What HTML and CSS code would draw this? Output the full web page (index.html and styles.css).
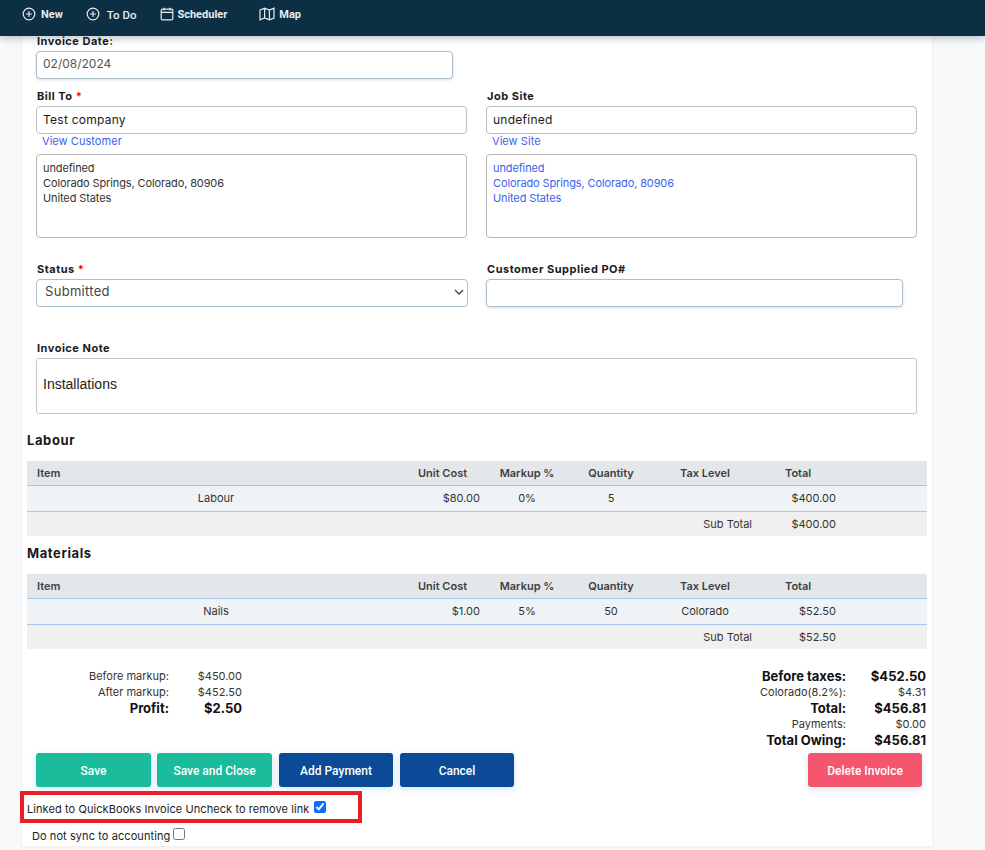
FILE: index.html
```html
<!DOCTYPE html>
<html lang="en">
<head>
<meta charset="utf-8">
<title>Invoice</title>
<link rel="stylesheet" href="styles.css">
</head>
<body>
<nav class="topbar">
  <a class="nav-item nav-new"><svg class="nav-icon" viewBox="0 0 14 14"><circle cx="7" cy="7" r="5.8"/><path d="M7 4v6M4 7h6"/></svg><span>New</span></a>
  <a class="nav-item nav-todo"><svg class="nav-icon" viewBox="0 0 14 14"><circle cx="7" cy="7" r="5.8"/><path d="M7 4v6M4 7h6"/></svg><span class="big">To Do</span></a>
  <a class="nav-item nav-sched"><svg class="nav-icon" viewBox="0 0 14 14"><rect x="1.2" y="2.2" width="11.6" height="10.6" rx="1.4"/><path d="M1.2 5.4h11.6M4 .8v2.6M10 .8v2.6"/></svg><span>Scheduler</span></a>
  <a class="nav-item nav-map"><svg class="nav-icon map-icon" viewBox="0 0 16 14"><path d="M1 3l4.6-1.8L10.4 3 15 1.2v9.8l-4.6 1.8L5.6 11 1 12.8zM5.6 1.2V11M10.4 3v9.8"/></svg><span>Map</span></a>
</nav>

<main class="card">
  <div class="field date-field">
    <label class="label">Invoice Date:</label>
    <input class="input soft date" value="02/08/2024">
  </div>

  <div class="two-col address-row">
    <div class="field">
      <label class="label">Bill To <span class="req">*</span></label>
      <input class="input dark" value="Test company">
      <a class="view-link">View Customer</a>
      <textarea class="address">undefined
Colorado Springs, Colorado, 80906
United States</textarea>
    </div>
    <div class="field">
      <label class="label">Job Site</label>
      <input class="input dark" value="undefined">
      <a class="view-link">View Site</a>
      <textarea class="address blue">undefined
Colorado Springs, Colorado, 80906
United States</textarea>
    </div>
  </div>

  <div class="two-col status-row">
    <div class="field">
      <label class="label">Status <span class="req">*</span></label>
      <select class="select"><option>Submitted</option></select>
    </div>
    <div class="field">
      <label class="label">Customer Supplied PO#</label>
      <input class="input soft po">
    </div>
  </div>

  <div class="field note-field">
    <label class="label">Invoice Note</label>
    <div class="note"><span>Installations</span></div>
  </div>

  <h2 class="section-title first">Labour</h2>
  <table class="items">
    <colgroup><col class="c1"><col class="c2"><col class="c3"><col class="c4"><col class="c5"><col class="c6"><col></colgroup>
    <thead><tr><th class="left">Item</th><th class="unit-h">Unit Cost</th><th>Markup %</th><th>Quantity</th><th>Tax Level</th><th class="total-h">Total</th><th></th></tr></thead>
    <tbody>
      <tr class="row"><td class="center">Labour</td><td class="right">$80.00</td><td class="center">0%</td><td class="center">5</td><td class="center"></td><td class="right">$400.00</td><td></td></tr>
      <tr class="sub"><td></td><td></td><td></td><td></td><td class="sub-label">Sub Total</td><td class="right">$400.00</td><td></td></tr>
    </tbody>
  </table>

  <h2 class="section-title">Materials</h2>
  <table class="items">
    <colgroup><col class="c1"><col class="c2"><col class="c3"><col class="c4"><col class="c5"><col class="c6"><col></colgroup>
    <thead><tr><th class="left">Item</th><th class="unit-h">Unit Cost</th><th>Markup %</th><th>Quantity</th><th>Tax Level</th><th class="total-h">Total</th><th></th></tr></thead>
    <tbody>
      <tr class="row"><td class="center">Nails</td><td class="right">$1.00</td><td class="center">5%</td><td class="center">50</td><td class="center">Colorado</td><td class="right">$52.50</td><td></td></tr>
      <tr class="sub"><td></td><td></td><td></td><td></td><td class="sub-label">Sub Total</td><td class="right">$52.50</td><td></td></tr>
    </tbody>
  </table>

  <div class="summary">
    <dl class="sum sum-left">
      <dt>Before markup:</dt><dd>$450.00</dd>
      <dt>After markup:</dt><dd>$452.50</dd>
      <dt class="strong">Profit:</dt><dd class="strong">$2.50</dd>
    </dl>
    <dl class="sum sum-right">
      <dt class="strong">Before taxes:</dt><dd class="strong">$452.50</dd>
      <dt>Colorado(8.2%):</dt><dd>$4.31</dd>
      <dt class="strong">Total:</dt><dd class="strong">$456.81</dd>
      <dt>Payments:</dt><dd>$0.00</dd>
      <dt class="strong">Total Owing:</dt><dd class="strong">$456.81</dd>
    </dl>
  </div>

  <div class="actions">
    <button class="btn green">Save</button>
    <button class="btn green">Save and Close</button>
    <button class="btn navy">Add Payment</button>
    <button class="btn navy">Cancel</button>
    <button class="btn red">Delete Invoice</button>
  </div>

  <div class="qb-box"><label class="check-row"><span class="check-text">Linked to QuickBooks Invoice Uncheck to remove link</span><input type="checkbox" class="check" checked></label></div>
  <label class="check-row sync"><span class="check-text">Do not sync to accounting</span><input type="checkbox" class="check"></label>
</main>
</body>
</html>
```
FILE: styles.css
```css
* { box-sizing: border-box; }
html, body { margin: 0; padding: 0; }
body {
  background: #f8f9fb;
  font-family: Inter, "Open Sans", sans-serif;
  font-size: 11px;
  color: #222;
  height: 850px;
  overflow: hidden;
}
.topbar {
  position: relative;
  z-index: 2;
  height: 36px;
  background: #0d2f43;
  box-shadow: 0 2px 8px rgba(13, 47, 67, .3);
  display: flex;
  align-items: flex-start;
  padding-top: 7px;
  color: #e8edf0;
  font-family: Roboto, sans-serif;
  font-weight: 700;
  font-size: 11px;
}
.nav-item { display: flex; align-items: center; height: 14px; }
.nav-icon { width: 14px; height: 14px; fill: none; stroke: #e8edf0; stroke-width: 1.2; margin-right: 5px; }
.map-icon { width: 16px; margin-right: 4px; }
.big { font-size: 11.5px; font-weight: 500; position: relative; top: 1px; }
.nav-new { margin-left: 22px; }
.nav-todo { margin-left: 23px; }
.nav-todo .nav-icon { margin-right: 7px; }
.nav-sched { margin-left: 24px; }
.nav-sched .nav-icon { margin-right: 3px; }
.nav-map { margin-left: 32px; }

.card {
  width: 910px;
  margin-left: 22px;
  height: 812px;
  background: #fff;
  box-shadow: 0 1px 3px rgba(0, 0, 0, .06);
  padding: 0 5px;
}
.field { display: flex; flex-direction: column; align-items: flex-start; }
.label {
  font-weight: 700;
  font-size: 11px;
  line-height: 15px;
  color: #1a1a1a;
  letter-spacing: .5px;
  margin-bottom: 2px;
  padding-left: 1px;
  height: 15px;
}
.req { color: #f00; }
.date-field { margin: -2px 0 0 9px; width: 417px; }
.input {
  width: 431px;
  height: 28px;
  border: 1px solid #bdbdbd;
  border-radius: 4px;
  background: #fff;
  padding: 0 6px 2px;
  font-family: Inter, sans-serif;
  font-size: 12px;
  letter-spacing: .25px;
  outline: none;
}
.soft {
  border-color: #aebfcc;
  box-shadow: 0 1px 3px rgba(60, 90, 120, .2);
  color: #555;
}
.date { width: 417px; letter-spacing: 0; padding-bottom: 3px; }
.dark { color: #1a1a1a; }
.po { width: 417px; }
.two-col { display: grid; grid-template-columns: 431px 431px; column-gap: 19px; margin-left: 9px; }
.address-row { margin-top: 10px; }
.status-row { margin-top: 24px; }
.view-link {
  color: #3a62f0;
  font-size: 11px;
  line-height: 14px;
  margin: 0 0 6px 6px;
  height: 14px;
  letter-spacing: .05px;
}
.address {
  width: 431px;
  height: 84px;
  border: 1px solid #b8b8b8;
  border-radius: 4px;
  padding: 6px;
  font-family: Inter, sans-serif;
  font-size: 11px;
  line-height: 15px;
  letter-spacing: -.12px;
  color: #333;
  resize: none;
  outline: none;
  display: block;
}
.blue { color: #3a62f0; }
.select {
  appearance: none;
  width: 432px;
  height: 28px;
  border: 1px solid #aebfcc;
  border-radius: 4px;
  background: #fff url("data:image/svg+xml,%3Csvg xmlns='http://www.w3.org/2000/svg' viewBox='0 0 10 6'%3E%3Cpath d='M1 1l4 4 4-4' fill='none' stroke='%23444' stroke-width='1.3'/%3E%3C/svg%3E") no-repeat right 3px top 9px / 10px 6px;
  padding: 0 8px 4px;
  font-family: Inter, sans-serif;
  font-size: 13px;
  letter-spacing: .3px;
  color: #444;
  outline: none;
}
.note-field { margin: 34px 0 0 9px; }
.note {
  width: 881px;
  height: 56px;
  border: 1px solid #c4c4c4;
  border-radius: 3px;
  padding: 0 6px 5px;
  display: flex;
  align-items: center;
  font-family: "Liberation Sans", Arial, sans-serif;
  font-size: 14px;
  color: #222;
}
.section-title {
  font-size: 13px;
  line-height: 16px;
  font-weight: 700;
  letter-spacing: .6px;
  color: #1a1a1a;
  margin: 0 0 13px;
}
.section-title.first { margin-top: 18px; }
.items {
  width: 900px;
  border-collapse: collapse;
  table-layout: fixed;
  font-size: 11px;
  color: #333;
}
.c1 { width: 378px; }
.c2 { width: 85px; }
.c3 { width: 74px; }
.c4 { width: 94px; }
.c5 { width: 94px; }
.c6 { width: 94px; }
.items th {
  height: 24px;
  background: #e4e7ea;
  font-weight: 600;
  color: #3a3f44;
  text-align: center;
  padding: 0;
  border-bottom: 1px solid #a9c7ee;
}
.items th.left { text-align: left; padding-left: 10px; }
.items th.unit-h { text-align: left; padding-left: 13px; }
.items th.total-h { text-align: left; padding-left: 33px; }
.row td {
  height: 26px;
  background: #eff3f5;
  padding: 0 0 1px;
  border-bottom: 1px solid #a9c7ee;
}
.sub td { height: 25px; background: #f0f0f0; padding: 0; }
.center { text-align: center; }
.items td.right { text-align: right; padding-right: 10px; }
.sub-label { text-align: right; }
.items + .section-title { margin-top: 9px; }

.summary {
  display: flex;
  justify-content: space-between;
  margin-top: 19px;
  height: 85px;
}
.sum {
  display: grid;
  margin: 0;
  grid-auto-rows: 16px;
  align-items: center;
  text-align: right;
  font-size: 11px;
  color: #333;
}
.sum dt, .sum dd { margin: 0; }
.sum .strong { font-weight: 700; font-size: 13px; color: #111; }
.sum-left { grid-template-columns: 142px 73px; }
.sum-right { grid-template-columns: 100px 80px; margin-right: 1px; }

.actions { display: flex; gap: 6px; margin-left: 9px; width: 886px; }
.btn {
  width: 115px;
  height: 34px;
  border: 0;
  border-radius: 3px;
  padding: 2px 0 0;
  color: #fff;
  font-family: Roboto, sans-serif;
  font-weight: 500;
  font-size: 12px;
  box-shadow: 0 2px 6px rgba(120, 180, 230, .35);
}
.green { background: #1abc9c; }
.navy { background: #0a4a96; width: 114px; }
.navy + .navy { margin-left: 1px; }
.green + .navy { margin-left: 1px; }
.red { background: #f5556d; margin-left: auto; width: 114px; }

.check-row {
  display: flex;
  align-items: center;
  font-size: 11px;
  letter-spacing: .08px;
  color: #222;
}
.check-text { padding-top: 4px; }
.check { margin: 0 0 0 5px; width: 12px; height: 12px; accent-color: #0d6efd; }
.qb-box {
  width: 342px;
  height: 32px;
  margin: 4px 0 0 -7px;
  border: 4px solid #ee1c25;
  padding: 0 0 0 3px;
  display: flex;
  align-items: center;
}
.sync { margin: 2px 0 0 5px; }
.sync .check { margin-left: 3px; }
```
